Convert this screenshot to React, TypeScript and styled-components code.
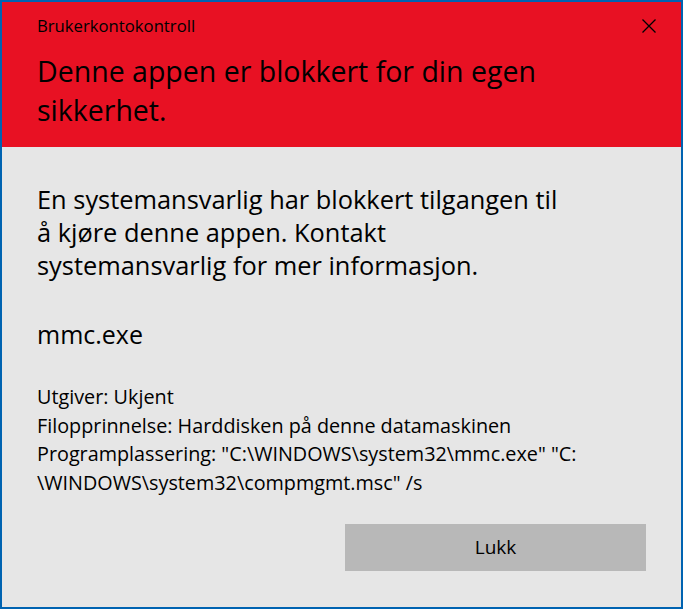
import React from "react";
import styled, { createGlobalStyle } from "styled-components";

const Global = createGlobalStyle`
  html, body { margin: 0; padding: 0; background: #ffffff; }
  body { font-family: "Open Sans", "Noto Sans", sans-serif; color: #000; }
`;

const Dialog = styled.div`
  width: 683px;
  height: 609px;
  box-sizing: border-box;
  border: 2px solid #0063b1;
  background: #e6e6e6;
  display: flex;
  flex-direction: column;
`;

const Header = styled.header`
  height: 145px;
  box-sizing: border-box;
  background: #e81123;
  padding: 14px 25px 0 35px;
  display: flex;
  flex-direction: column;
`;

const TitleBar = styled.div`
  display: flex;
  justify-content: space-between;
  align-items: flex-start;
`;

const Caption = styled.div`
  font-size: 16.7px;
  line-height: 20px;
`;

const CloseButton = styled.button`
  width: 14px;
  height: 14px;
  margin-top: 3px;
  padding: 0;
  border: 0;
  background: transparent;
  display: flex;
  cursor: pointer;
`;

const Heading = styled.h1`
  margin: 16px 0 0;
  font-weight: 400;
  font-size: 28.5px;
  line-height: 39px;
  width: 540px;
`;

const Body = styled.main`
  flex: 1;
  padding: 36px 35px 0 35px;
  display: flex;
  flex-direction: column;
`;

const Message = styled.p`
  margin: 0;
  font-size: 25.4px;
  line-height: 33px;
  width: 532px;
`;

const AppName = styled.div`
  margin-top: 36px;
  font-size: 25px;
  line-height: 33px;
`;

const Details = styled.div`
  margin-top: 32px;
  font-size: 19.8px;
  line-height: 28.7px;
  width: 560px;
`;

const Footer = styled.div`
  display: flex;
  justify-content: flex-end;
  margin-top: 26px;
`;

const CloseAction = styled.button`
  width: 301px;
  height: 47px;
  border: 0;
  background: #b8b8b8;
  font-family: inherit;
  font-size: 19px;
  color: #000;
  cursor: pointer;
`;

export default function App() {
  return (
    <>
      <Global />
      <Dialog>
        <Header>
          <TitleBar>
            <Caption>Brukerkontokontroll</Caption>
            <CloseButton aria-label="Lukk">
              <svg width="14" height="14" viewBox="0 0 14 14">
                <path d="M0.5 0.5 L13.5 13.5 M13.5 0.5 L0.5 13.5" stroke="#000" strokeWidth="1.3" />
              </svg>
            </CloseButton>
          </TitleBar>
          <Heading>Denne appen er blokkert for din egen sikkerhet.</Heading>
        </Header>
        <Body>
          <Message>
            En systemansvarlig har blokkert tilgangen til å kjøre denne appen. Kontakt systemansvarlig for mer informasjon.
          </Message>
          <AppName>mmc.exe</AppName>
          <Details>
            <div>Utgiver: Ukjent</div>
            <div>Filopprinnelse: Harddisken på denne datamaskinen</div>
            <div>
              Programplassering: "C:\WINDOWS\system32\mmc.exe" "C:
              <br />
              \WINDOWS\system32\compmgmt.msc" /s
            </div>
          </Details>
          <Footer>
            <CloseAction>Lukk</CloseAction>
          </Footer>
        </Body>
      </Dialog>
    </>
  );
}
